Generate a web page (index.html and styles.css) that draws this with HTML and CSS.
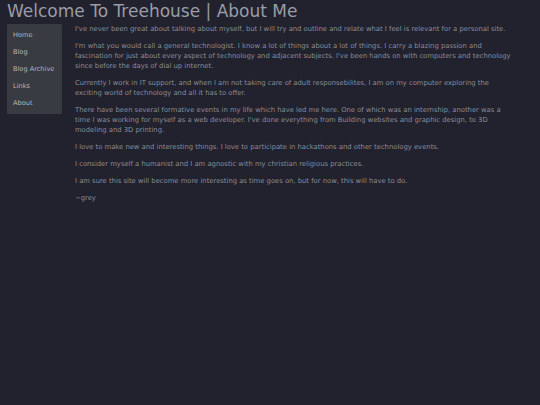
FILE: index.html
```html
<!DOCTYPE html>
<html>
<head>
<meta charset="utf-8">
<link rel="stylesheet" href="styles.css">
</head>
<body>
<h1 class="title">Welcome To Treehouse | About Me</h1>
<div class="layout">
  <nav class="sidebar">
    <a class="nav-item" href="#">Home</a>
    <a class="nav-item" href="#">Blog</a>
    <a class="nav-item" href="#">Blog Archive</a>
    <a class="nav-item" href="#">Links</a>
    <a class="nav-item" href="#">About</a>
  </nav>
  <main class="content">
    <p>I've never been great about talking about myself, but I will try and outline and relate what I feel is relevant for a personal site.</p>
    <p>I'm what you would call a general technologist. I know a lot of things about a lot of things. I carry a blazing passion and fascination for just about every aspect of technology and adjacent subjects. I've been hands on with computers and technology since before the days of dial up internet.</p>
    <p>Currently I work in IT support, and when I am not taking care of adult responsebilites, I am on my computer exploring the exciting world of technology and all it has to offer.</p>
    <p>There have been several formative events in my life which have led me here. One of which was an internship, another was a time I was working for myself as a web developer. I've done everything from Building websites and graphic design, to 3D modeling and 3D printing.</p>
    <p>I love to make new and interesting things. I love to participate in hackathons and other technology events.</p>
    <p>I consider myself a humanist and I am agnostic with my christian religious practices.</p>
    <p>I am sure this site will become more interesting as time goes on, but for now, this will have to do.</p>
    <p>~grey</p>
  </main>
</div>
</body>
</html>
```
FILE: styles.css
```css
html, body {
  margin: 0;
  background: #21222e;
  height: 100%;
}
body {
  padding: 0 7px;
  font-family: "DejaVu Sans", Verdana, sans-serif;
  color: #8b8c96;
}
.title {
  margin: 0;
  font-weight: normal;
  font-size: 17px;
  line-height: 23px;
  color: #9a9ca6;
}
.layout {
  display: flex;
  align-items: flex-start;
  gap: 13px;
  margin-top: 1px;
}
.sidebar {
  flex: 0 0 55px;
  display: flex;
  flex-direction: column;
  padding: 3px 0 2px;
  background: #393b43;
  border-radius: 1px;
}
.nav-item {
  display: block;
  padding-left: 6px;
  line-height: 17px;
  font-size: 6.6px;
  color: #b4b6bc;
  text-decoration: none;
  white-space: nowrap;
}
.content {
  flex: 1;
  font-size: 6.8px;
  line-height: 10px;
  padding-right: 19px;
}
.content p {
  margin: 0 0 7px;
}
```
